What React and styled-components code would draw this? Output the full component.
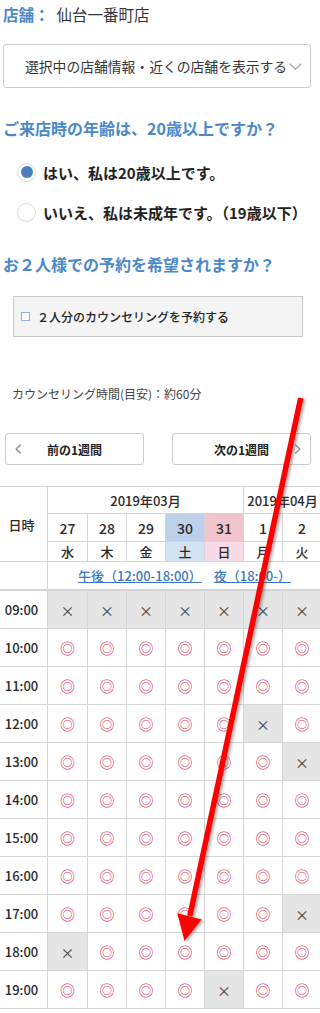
import React from 'react';
import styled, { createGlobalStyle } from 'styled-components';

const GlobalStyle = createGlobalStyle`
  html, body { margin: 0; padding: 0; background: #fff; overflow: hidden; }
  body { font-family: "Noto Sans CJK JP", "Noto Sans", sans-serif; color: #333; }
  * { box-sizing: border-box; }
`;

const BLUE = '#4a88c9';
const LINE = '#d5d5d5';

const Page = styled.div`
  position: relative;
  width: 320px;
  height: 1013px;
  overflow: hidden;
`;

const StoreLine = styled.div`
  padding-left: 3px;
  font-size: 15.5px;
  line-height: 28px;
  color: #333;
  white-space: nowrap;
`;

const StoreLabel = styled.span`
  color: ${BLUE};
  font-weight: bold;
  margin-right: 7px;
`;

const SelectBox = styled.div`
  margin: 16px 0 0 3px;
  width: 308px;
  height: 44px;
  border: 1px solid #ccc;
  border-radius: 3px;
  display: flex;
  align-items: center;
  padding-left: 21px;
  font-size: 13.8px;
  color: #333;
  white-space: nowrap;
`;

const Chevron = styled.svg`
  flex: none;
  margin-left: 2px;
`;

const Question = styled.h2`
  margin: ${p => p.$mt}px 0 0;
  padding-left: 3px;
  font-size: 16px;
  line-height: 24px;
  font-weight: bold;
  color: ${BLUE};
  white-space: nowrap;
`;

const RadioList = styled.div`
  margin-top: 12px;
  display: flex;
  flex-direction: column;
`;

const RadioRow = styled.label`
  display: flex;
  align-items: center;
  height: 40px;
  padding-left: 17px;
  gap: 7px;
  font-size: 15px;
  font-weight: bold;
  color: #222;
  white-space: nowrap;
`;

const RadioDot = styled.span`
  flex: none;
  width: 19px;
  height: 19px;
  border-radius: 50%;
  border: 1px solid #d9d9d9;
  background: #fff;
  display: flex;
  align-items: center;
  justify-content: center;
  &::after {
    content: '';
    width: 12px;
    height: 12px;
    border-radius: 50%;
    background: ${p => (p.$checked ? '#4a7fbe' : 'transparent')};
  }
`;

const CheckPanel = styled.label`
  margin: 20px 0 0 13px;
  width: 290px;
  height: 41px;
  background: #f4f4f4;
  border: 1px solid #c9c9c9;
  display: flex;
  align-items: center;
  padding-left: 7px;
  gap: 7px;
  font-size: 12px;
  font-weight: 500;
  color: #222;
  white-space: nowrap;
`;

const CheckSquare = styled.span`
  flex: none;
  width: 9px;
  height: 9px;
  border: 1px solid #8db3de;
  background: #fff;
`;

const Duration = styled.p`
  margin: 47px 0 0;
  padding-left: 12px;
  font-size: 12px;
  line-height: 20px;
  color: #444;
  white-space: nowrap;
`;

const WeekNav = styled.div`
  margin-top: 29px;
  display: flex;
  padding-left: 5px;
  gap: 28px;
`;

const WeekButton = styled.button`
  width: 139px;
  height: 32px;
  border: 1px solid #ccc;
  border-radius: 3px;
  background: #fff;
  padding: 0 9px;
  display: grid;
  grid-template-columns: 1fr auto 1fr;
  align-items: center;
  font-family: inherit;
  font-size: 12px;
  font-weight: bold;
  color: #222;
`;

const NavArrow = styled.svg`
  justify-self: ${p => (p.$side === 'right' ? 'end' : 'start')};
  grid-column: ${p => (p.$side === 'right' ? 3 : 1)};
  grid-row: 1;
`;

const NavLabel = styled.span`
  grid-column: 2;
  grid-row: 1;
  white-space: nowrap;
`;

const Schedule = styled.div`
  margin-top: 21px;
  display: grid;
  grid-template-columns: 48px 40px repeat(6, 39px);
  grid-template-rows: 27px 28px 20px 29px repeat(11, 38px);
  border-top: 1px solid ${LINE};
  width: 322px;
  font-size: 13px;
  font-weight: 500;
  color: #2a2a2a;
`;

const Cell = styled.div`
  border-right: 1px solid ${LINE};
  border-bottom: ${p => (p.$thick ? 2 : 1)}px solid ${LINE};
  display: flex;
  align-items: center;
  justify-content: center;
  white-space: nowrap;
  background: ${p => p.$bg || '#fff'};
  grid-column: ${p => (p.$span ? `span ${p.$span}` : 'auto')};
  grid-row: ${p => (p.$rows ? `span ${p.$rows}` : 'auto')};
`;

const TimeCell = styled(Cell)`
  padding-right: 4px;
  font-size: 13px;
`;

const DateCell = styled(Cell)`
  font-size: 14px;
`;

const PeriodLink = styled.a`
  color: #3b78bf;
  text-decoration: underline;
  font-size: 13px;
  & + & {
    margin-left: 12px;
  }
`;

const Mark = styled.span`
  font-size: ${p => (p.$open ? 15 : 14)}px;
  font-weight: normal;
  line-height: 1;
  color: ${p => (p.$open ? '#dc3a5e' : '#444')};
`;

const Annotation = styled.svg`
  position: absolute;
  left: 0;
  top: 0;
  pointer-events: none;
`;

const dates = [
  { d: '27', w: '水' },
  { d: '28', w: '木' },
  { d: '29', w: '金' },
  { d: '30', w: '土', bg: '#bdd0e9', wbg: '#d2e2f3' },
  { d: '31', w: '日', bg: '#f1c5ce', wbg: '#f8dbe6' },
  { d: '1', w: '月' },
  { d: '2', w: '火' },
];

const X = 'x';
const O = 'o';
const slots = [
  ['09:00', [X, X, X, X, X, X, X]],
  ['10:00', [O, O, O, O, O, O, O]],
  ['11:00', [O, O, O, O, O, O, O]],
  ['12:00', [O, O, O, O, O, X, O]],
  ['13:00', [O, O, O, O, O, O, X]],
  ['14:00', [O, O, O, O, O, O, O]],
  ['15:00', [O, O, O, O, O, O, O]],
  ['16:00', [O, O, O, O, O, O, O]],
  ['17:00', [O, O, O, O, O, O, X]],
  ['18:00', [X, O, O, O, O, O, O]],
  ['19:00', [O, O, O, O, X, O, O]],
];

export default function App() {
  return (
    <Page>
      <GlobalStyle />
      <StoreLine>
        <StoreLabel>店舗：</StoreLabel>仙台一番町店
      </StoreLine>
      <SelectBox>
        選択中の店舗情報・近くの店舗を表示する
        <Chevron width="13" height="7" viewBox="0 0 13 7">
          <polyline points="0.7,0.7 6.5,6 12.3,0.7" fill="none" stroke="#aaa" strokeWidth="1.3" />
        </Chevron>
      </SelectBox>

      <Question $mt={28}>ご来店時の年齢は、20歳以上ですか？</Question>
      <RadioList>
        <RadioRow>
          <RadioDot $checked />
          はい、私は20歳以上です。
        </RadioRow>
        <RadioRow>
          <RadioDot />
          いいえ、私は未成年です。（19歳以下）
        </RadioRow>
      </RadioList>

      <Question $mt={20}>お２人様での予約を希望されますか？</Question>
      <CheckPanel>
        <CheckSquare />
        ２人分のカウンセリングを予約する
      </CheckPanel>

      <Duration>カウンセリング時間(目安)：約60分</Duration>

      <WeekNav>
        <WeekButton>
          <NavArrow $side="left" width="7" height="10" viewBox="0 0 7 10">
            <polyline points="5.8,0.6 1.2,5 5.8,9.4" fill="none" stroke="#999" strokeWidth="1.5" />
          </NavArrow>
          <NavLabel>前の1週間</NavLabel>
        </WeekButton>
        <WeekButton>
          <NavLabel>次の1週間</NavLabel>
          <NavArrow $side="right" width="7" height="10" viewBox="0 0 7 10">
            <polyline points="1.2,0.6 5.8,5 1.2,9.4" fill="none" stroke="#999" strokeWidth="1.5" />
          </NavArrow>
        </WeekButton>
      </WeekNav>

      <Schedule>
        <TimeCell $rows={3}>日時</TimeCell>
        <Cell $span={5}>2019年03月</Cell>
        <Cell $span={2}>2019年04月</Cell>
        {dates.map(x => (
          <DateCell key={'d' + x.d} $bg={x.bg}>{x.d}</DateCell>
        ))}
        {dates.map(x => (
          <Cell key={'w' + x.d} $bg={x.wbg}>{x.w}</Cell>
        ))}
        <TimeCell $thick />
        <Cell $span={7} $thick>
          <PeriodLink href="#pm">午後（12:00-18:00）</PeriodLink>
          <PeriodLink href="#night">夜（18:00-）</PeriodLink>
        </Cell>
        {slots.map(([time, row]) => (
          <React.Fragment key={time}>
            <TimeCell>{time}</TimeCell>
            {row.map((s, i) => (
              <Cell key={i} $bg={s === X ? '#e5e5e5' : undefined}>
                <Mark $open={s === O}>{s === O ? '◎' : '×'}</Mark>
              </Cell>
            ))}
          </React.Fragment>
        ))}
      </Schedule>

      <Annotation width="320" height="1013" viewBox="0 0 320 1013">
        <defs>
          <filter id="arrowShadow" x="-20%" y="-5%" width="140%" height="110%">
            <feDropShadow dx="2" dy="1" stdDeviation="1.5" floodColor="#000" floodOpacity="0.35" />
          </filter>
        </defs>
        <g filter="url(#arrowShadow)">
          <line x1="300.7" y1="398" x2="189.8" y2="916" stroke="#ff0000" strokeWidth="5.5" />
          <polygon points="184.5,941 177.3,913.3 201.6,919.5" fill="#ff0000" />
        </g>
      </Annotation>
    </Page>
  );
}
